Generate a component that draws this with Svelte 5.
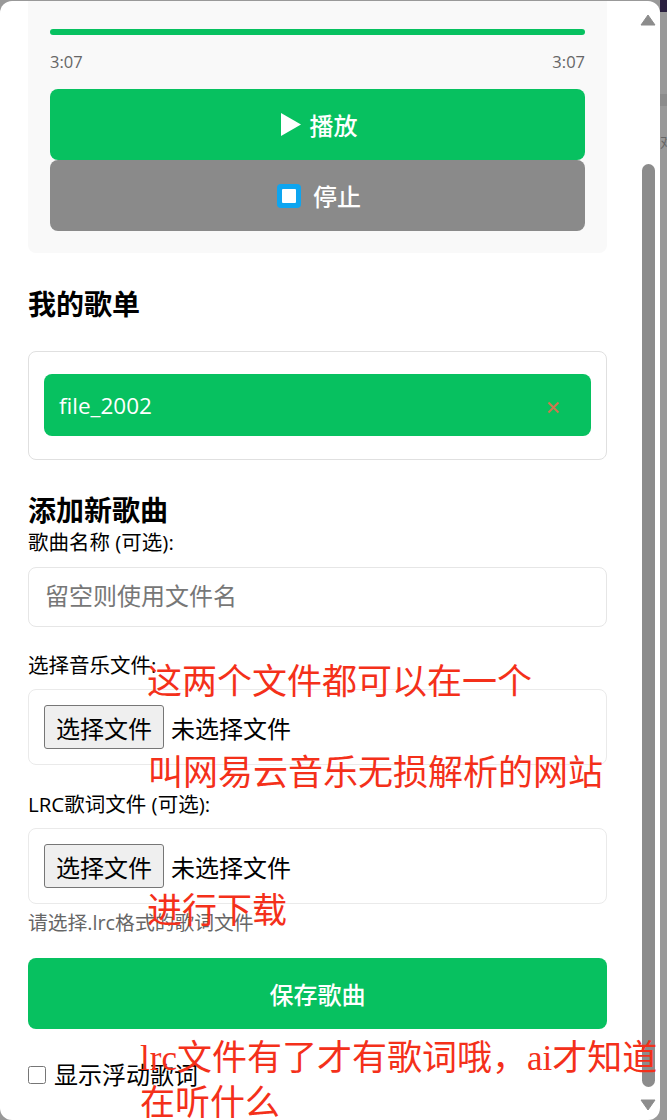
<script>
  let songs = [{ name: 'file_2002' }];
  let notes = [
    { text: '这两个文件都可以在一个', x: 147, y: 656, size: 35, cls: 'sans' },
    { text: '叫网易云音乐无损解析的网站', x: 148, y: 747, size: 35, cls: 'sans' },
    { text: '进行下载', x: 147, y: 885, size: 35, cls: 'sans' },
    { text: 'lrc文件有了才有歌词哦，ai才知道', x: 140, y: 1036, size: 35, cls: 'serif' },
    { text: '在听什么', x: 140, y: 1081, size: 35, cls: 'serif' }
  ];
</script>

<div class="backdrop">
  <div class="corner"></div>
  <div class="band"></div>
  <div class="peek">对</div>

  <div class="modal">
    <div class="content">
      <section class="player">
        <div class="progress"></div>
        <div class="times"><span>3:07</span><span>3:07</span></div>
        <button class="big green">
          <svg width="20" height="23" viewBox="0 0 20 23"><path d="M0 0L20 11.5L0 23Z" fill="#fff" /></svg>
          播放
        </button>
        <button class="big grey">
          <span class="stop"><i></i></span>
          停止
        </button>
      </section>

      <h2 class="list-title">我的歌单</h2>
      <div class="list">
        {#each songs as song}
          <div class="song">
            <span>{song.name}</span>
            <svg class="del" width="13" height="13" viewBox="0 0 13 13"><path d="M1.5 1.5L11.5 11.5M11.5 1.5L1.5 11.5" stroke="#cf7750" stroke-width="2" /></svg>
          </div>
        {/each}
      </div>

      <h2 class="add-title">添加新歌曲</h2>
      <div class="label first">歌曲名称 (可选):</div>
      <input class="text" placeholder="留空则使用文件名" />

      <div class="label music">选择音乐文件:</div>
      <div class="filebox"><span class="pick">选择文件</span><span>未选择文件</span></div>

      <div class="label lrc">LRC歌词文件 (可选):</div>
      <div class="filebox"><span class="pick">选择文件</span><span>未选择文件</span></div>
      <div class="hint">请选择.lrc格式的歌词文件</div>

      <button class="save">保存歌曲</button>

      <label class="check"><input type="checkbox" /><span>显示浮动歌词</span></label>
    </div>

    <div class="scrollbar">
      <svg width="16" height="12" viewBox="0 0 16 12"><path d="M8 1L15 11H1Z" fill="#8c8c8c" stroke="#8c8c8c" stroke-linejoin="round" /></svg>
      <div class="track"><div class="thumb"></div></div>
      <svg width="16" height="12" viewBox="0 0 16 12"><path d="M8 11L15 1H1Z" fill="#8c8c8c" stroke="#8c8c8c" stroke-linejoin="round" /></svg>
    </div>
  </div>

  {#each notes as note}
    <div class="note {note.cls}" style="left: {note.x}px; top: {note.y}px; font-size: {note.size}px">{note.text}</div>
  {/each}
</div>

<style>
  :global(body) {
    margin: 0;
    background: #999;
  }

  .backdrop {
    position: relative;
    width: 667px;
    height: 1120px;
    overflow: hidden;
    background: #999;
    padding-top: 1px;
    box-sizing: border-box;
    font-family: "Open Sans", "Noto Sans CJK SC", sans-serif;
    color: #000;
  }

  /* bits of the page behind the dialog */
  .corner {
    position: absolute;
    top: 0;
    right: 0;
    width: 7px;
    height: 12px;
    background: #2b2140;
  }

  .band {
    position: absolute;
    top: 94px;
    right: 0;
    width: 7px;
    height: 12px;
    background: #8c8c8c;
  }

  .peek {
    position: absolute;
    top: 131px;
    left: 660px;
    font-size: 14px;
    color: #666;
  }

  .modal {
    position: relative;
    display: flex;
    width: 660px;
    height: 1119px;
    background: #fff;
    border-radius: 12px;
    overflow: hidden;
  }

  .content {
    flex: 1;
    min-width: 0;
    padding: 0 32px 0 28px;
  }

  .player {
    background: #f9f9f9;
    border-radius: 0 0 8px 8px;
    padding: 28px 22px 22px;
  }

  .progress {
    height: 6px;
    border-radius: 3px;
    background: #07c160;
  }

  .times {
    display: flex;
    justify-content: space-between;
    margin-top: 15px;
    margin-bottom: 15px;
    font-size: 16.5px;
    line-height: 24px;
    color: #666;
  }

  .big {
    display: flex;
    align-items: center;
    justify-content: center;
    gap: 9px;
    width: 100%;
    height: 71px;
    padding: 0 0 0 3px;
    border: none;
    border-radius: 8px;
    color: #fff;
    font: inherit;
    font-size: 24px;
    font-weight: 500;
  }

  .green {
    background: #07c160;
  }

  .grey {
    background: #8a8a8a;
    gap: 12px;
  }

  .stop {
    display: flex;
    align-items: center;
    justify-content: center;
    width: 24px;
    height: 24px;
    border-radius: 4px;
    background: #0ea5f0;
  }

  .stop i {
    width: 14px;
    height: 14px;
    border-radius: 1px;
    background: #fff;
  }

  h2 {
    margin: 0;
    font-size: 28px;
    line-height: 34px;
    font-weight: 700;
  }

  .list-title {
    margin-top: 34px;
  }

  .list {
    margin-top: 30px;
    padding: 22px 15px 23px;
    border: 1px solid #e0e0e0;
    border-radius: 8px;
  }

  .song {
    display: flex;
    align-items: center;
    justify-content: space-between;
    height: 62px;
    padding: 0 31px 0 15px;
    border-radius: 8px;
    background: #07c160;
    color: #fff;
    font-size: 22.5px;
  }

  .del {
    margin-top: 5px;
  }

  .add-title {
    margin-top: 33px;
  }

  .label {
    font-size: 20.5px;
    line-height: 24px;
  }

  .first {
    margin-top: 3px;
  }

  .music {
    margin-top: 26px;
  }

  .lrc {
    margin-top: 27px;
  }

  .text {
    display: block;
    width: 100%;
    height: 60px;
    margin-top: 13px;
    padding: 0 16px 4px;
    box-sizing: border-box;
    border: 1px solid #e6e6e6;
    border-radius: 8px;
    font: inherit;
    font-size: 24px;
  }

  .text::placeholder {
    color: #777;
  }

  .filebox {
    display: flex;
    align-items: center;
    gap: 7px;
    height: 76px;
    margin-top: 12px;
    padding: 0 15px;
    box-sizing: border-box;
    border: 1px solid #eaeaea;
    border-radius: 8px;
    font-size: 24px;
  }

  .pick {
    display: flex;
    align-items: center;
    justify-content: center;
    width: 120px;
    height: 44px;
    box-sizing: border-box;
    border: 1px solid #767676;
    border-radius: 3px;
    background: #efefef;
  }

  .hint {
    margin-top: 7px;
    font-size: 19.8px;
    line-height: 24px;
    color: #666;
  }

  .save {
    display: block;
    width: 100%;
    height: 71px;
    margin-top: 23px;
    border: none;
    border-radius: 8px;
    background: #07c160;
    color: #fff;
    font: inherit;
    font-size: 24px;
    font-weight: 500;
  }

  .check {
    display: flex;
    align-items: center;
    gap: 8px;
    margin-top: 29px;
    font-size: 24px;
    line-height: 34px;
  }

  .check input {
    width: 18px;
    height: 18px;
    margin: 0;
  }

  .scrollbar {
    display: flex;
    flex-direction: column;
    align-items: center;
    flex: none;
    width: 18px;
    margin-right: 3px;
    padding: 13px 0 9px;
    box-sizing: border-box;
  }

  .track {
    flex: 1;
    width: 13px;
    padding: 138px 0 12px;
    box-sizing: border-box;
    display: flex;
  }

  .thumb {
    flex: 1;
    border-radius: 7px;
    background: #8c8c8c;
  }

  .note {
    position: absolute;
    color: #f4301a;
    white-space: nowrap;
    line-height: 46px;
  }

  .sans {
    font-family: "Noto Sans CJK SC", sans-serif;
  }

  .serif {
    font-family: "Liberation Serif", "Noto Sans CJK SC", serif;
  }
</style>
